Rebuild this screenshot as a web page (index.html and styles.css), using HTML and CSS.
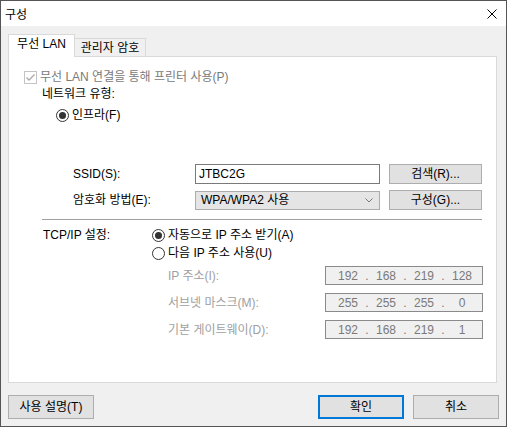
FILE: index.html
```html
<!DOCTYPE html>
<html lang="ko">
<head>
<meta charset="utf-8">
<title>구성</title>
<link rel="stylesheet" href="styles.css">
</head>
<body>
<div class="window">
  <div class="titlebar">
    <span class="title">구성</span>
    <span class="close"><svg width="10" height="10" viewBox="0 0 10 10"><path d="M0.5 0.5 L9.5 9.5 M9.5 0.5 L0.5 9.5" stroke="#000" stroke-width="1" fill="none"/></svg></span>
  </div>
  <div class="client">
    <div class="tabs">
      <div class="tab active">무선 LAN</div>
      <div class="tab">관리자 암호</div>
    </div>
    <div class="panel">
      <div class="check-row">
        <span class="checkbox"><svg width="11" height="11" viewBox="0 0 11 11"><path d="M1.5 5.5 L4 8 L9.5 2.5" stroke="#a8a8a8" stroke-width="1.3" fill="none"/></svg></span>
        <span class="disabled">무선 LAN 연결을 통해 프린터 사용(P)</span>
      </div>
      <div class="nettype">네트워크 유형:</div>
      <div class="radio-row infra"><span class="radio on"></span><span>인프라(F)</span></div>
      <div class="wifi-grid">
        <span class="lbl">SSID(S):</span>
        <div class="input">JTBC2G</div>
        <div class="btn">검색(R)...</div>
        <span class="lbl">암호화 방법(E):</span>
        <div class="select"><span>WPA/WPA2 사용</span><svg width="8" height="5" viewBox="0 0 8 5"><path d="M0.5 0.5 L4 4 L7.5 0.5" stroke="#7a7a7a" stroke-width="1" fill="none"/></svg></div>
        <div class="btn">구성(G)...</div>
      </div>
      <div class="sep"></div>
      <div class="tcp">
        <div class="tcp-label">TCP/IP 설정:</div>
        <div class="tcp-opts">
          <div class="radio-row"><span class="radio on"></span><span>자동으로 IP 주소 받기(A)</span></div>
          <div class="radio-row second"><span class="radio"></span><span>다음 IP 주소 사용(U)</span></div>
          <div class="ip-grid">
            <span class="ip-lbl">IP 주소(I):</span>
            <div class="ipbox"><span>192</span><span>.</span><span>168</span><span>.</span><span>219</span><span>.</span><span>128</span></div>
            <span class="ip-lbl">서브넷 마스크(M):</span>
            <div class="ipbox"><span>255</span><span>.</span><span>255</span><span>.</span><span>255</span><span>.</span><span>0</span></div>
            <span class="ip-lbl">기본 게이트웨이(D):</span>
            <div class="ipbox"><span>192</span><span>.</span><span>168</span><span>.</span><span>219</span><span>.</span><span>1</span></div>
          </div>
        </div>
      </div>
    </div>
    <div class="footer">
      <div class="fbtn">사용 설명(T)</div>
      <div class="spacer"></div>
      <div class="fbtn default">확인</div>
      <div class="fbtn">취소</div>
    </div>
  </div>
</div>
</body>
</html>
```
FILE: styles.css
```css
* { box-sizing: border-box; }
html, body { margin: 0; padding: 0; }
body {
  width: 507px;
  height: 427px;
  overflow: hidden;
  font-family: "Liberation Sans", "Noto Sans CJK KR", sans-serif;
  font-size: 12px;
  color: #000;
  background: #f0f0f0;
}
.window {
  width: 507px;
  height: 427px;
  border: 1px solid #555;
  display: flex;
  flex-direction: column;
  background: #f0f0f0;
}
.titlebar {
  height: 25px;
  flex: none;
  background: #fff;
  display: flex;
  align-items: center;
  justify-content: space-between;
  padding: 0 9px 0 4px;
}
.title {
  font-family: "Noto Sans CJK KR", sans-serif;
  font-size: 12px;
  line-height: 14px;
}
.close { display: flex; }
.close svg { display: block; }
.client {
  flex: 1;
  padding: 8px 7px 0 7px;
}
.tabs {
  display: flex;
  align-items: flex-end;
  height: 22px;
}
.tab {
  height: 18px;
  width: 72px;
  margin-left: -1px;
  border: 1px solid #d9d9d9;
  border-bottom: none;
  background: #f0f0f0;
  display: flex;
  align-items: center;
  justify-content: center;
  line-height: 14px;
  white-space: nowrap;
}
.tab.active {
  height: 23px;
  width: 67px;
  margin-left: 0;
  margin-bottom: -1px;
  background: #fff;
  position: relative;
  z-index: 1;
  padding-bottom: 4px;
}
.panel {
  width: 489px;
  height: 327px;
  border: 1px solid #d9d9d9;
  background: #fff;
}
.check-row {
  display: flex;
  align-items: center;
  height: 13px;
  margin: 14px 0 0 15px;
  line-height: 13px;
}
.checkbox {
  width: 13px;
  height: 13px;
  border: 1px solid #c4c4c4;
  background: #fff;
  margin-right: 3px;
  display: flex;
}
.checkbox svg { display: block; }
.disabled { color: #7a7a7a; }
.nettype {
  margin: 3px 0 0 33px;
  height: 14px;
  line-height: 14px;
}
.radio-row {
  display: flex;
  align-items: center;
  height: 13px;
  line-height: 13px;
  white-space: nowrap;
}
.radio-row.infra { margin: 8px 0 0 47px; }
.radio-row.second { margin-top: 5px; }
.radio {
  width: 13px;
  height: 13px;
  border: 1px solid #333;
  border-radius: 50%;
  background: #fff;
  margin-right: 3px;
  display: flex;
  align-items: center;
  justify-content: center;
  flex: none;
}
.radio.on::after {
  content: "";
  width: 7px;
  height: 7px;
  border-radius: 50%;
  background: #333;
}
.wifi-grid {
  display: grid;
  grid-template-columns: 113px 185px 93px;
  grid-template-rows: 20px 20px;
  column-gap: 9px;
  row-gap: 6px;
  margin: 42px 0 0 64px;
  align-items: center;
}
.lbl { line-height: 14px; white-space: nowrap; }
.input {
  height: 20px;
  border: 1px solid #7a7a7a;
  background: #fff;
  padding-left: 3px;
  display: flex;
  align-items: center;
  line-height: 14px;
}
.select {
  height: 19px;
  border: 1px solid #acacac;
  background: #e5e5e5;
  padding: 0 6px 0 5px;
  display: flex;
  align-items: center;
  justify-content: space-between;
  line-height: 14px;
}
.btn {
  height: 20px;
  border: 1px solid #adadad;
  background: #e1e1e1;
  display: flex;
  align-items: center;
  justify-content: center;
  line-height: 14px;
}
.sep {
  margin: 9px 0 0 33px;
  width: 440px;
  height: 1px;
  background: #a0a0a0;
}
.tcp {
  display: flex;
  margin: 9px 0 0 34px;
}
.tcp-label {
  width: 109px;
  height: 13px;
  line-height: 13px;
  white-space: nowrap;
}
.tcp-opts { display: flex; flex-direction: column; }
.ip-grid {
  display: grid;
  grid-template-columns: 157px 158px;
  grid-auto-rows: 19px;
  row-gap: 8px;
  margin: 6px 0 0 16px;
  align-items: center;
}
.ip-lbl { color: #a0a0a0; line-height: 14px; white-space: nowrap; }
.ipbox {
  height: 19px;
  border: 1px solid #8a8a8a;
  background: #f0f0f0;
  display: grid;
  grid-template-columns: 30px 8px 30px 8px 30px 8px 30px;
  padding-left: 7px;
  align-items: center;
  color: #7a7a7a;
  line-height: 14px;
  text-align: center;
}
.footer {
  display: flex;
  margin-top: 12px;
  gap: 9px;
}
.spacer { flex: 1; }
.fbtn {
  width: 86px;
  height: 24px;
  border: 1px solid #adadad;
  background: #e1e1e1;
  display: flex;
  align-items: center;
  justify-content: center;
  line-height: 14px;
}
.fbtn.default { border: 2px solid #0078d7; }
```
